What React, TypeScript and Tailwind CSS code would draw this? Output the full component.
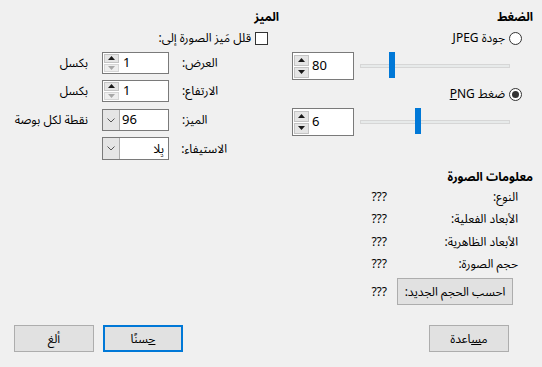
import React from "react"

const font = "font-['Noto_Sans','Noto_Sans_Arabic','DejaVu_Sans',sans-serif]"

function Radio({ checked }: { checked?: boolean }) {
  return (
    <span className="w-[13px] h-[13px] rounded-full border border-[#333333] bg-white flex items-center justify-center shrink-0">
      {checked && <span className="w-[7px] h-[7px] rounded-full bg-[#333333]" />}
    </span>
  )
}

function Arrow({ up, dim }: { up?: boolean; dim?: boolean }) {
  return (
    <svg width="7" height="4" viewBox="0 0 7 4">
      <path d={up ? "M0 4 L3.5 0 L7 4 Z" : "M0 0 L3.5 4 L7 0 Z"} fill={dim ? "#a8a8a8" : "#1a1a1a"} />
    </svg>
  )
}

/* compress spin box: 28px tall */
function TallSpin({ value }: { value: string }) {
  return (
    <div dir="ltr" className="w-[62px] h-[28px] border border-[#7a7a7a] bg-white flex items-center pl-[1px]">
      <div className="w-[15px] h-[23px] flex flex-col gap-[1px]">
        <span className="flex-1 bg-[#e5e5e5] border border-[#c4c4c4] flex items-center justify-center"><Arrow up /></span>
        <span className="flex-1 bg-[#e5e5e5] border border-[#c4c4c4] flex items-center justify-center"><Arrow /></span>
      </div>
      <span className="ml-[3px] text-[13px]">{value}</span>
    </div>
  )
}

/* resolution spin box: 22px tall */
function SmallSpin({ value }: { value: string }) {
  return (
    <div dir="ltr" className="w-[67px] h-[22px] border border-[#7a7a7a] bg-white flex items-center pl-[1px]">
      <div className="w-[15px] h-[18px] flex flex-col gap-[1px]">
        <span className="flex-1 bg-[#e5e5e5] border border-[#c4c4c4] flex items-center justify-center"><Arrow up /></span>
        <span className="flex-1 bg-[#eeeeee] border border-[#d6d6d6] flex items-center justify-center"><Arrow dim /></span>
      </div>
      <span className="ml-[4px] text-[13px]">{value}</span>
    </div>
  )
}

function Combo({ children, right }: { children: React.ReactNode; right?: boolean }) {
  return (
    <div dir="ltr" className="w-[67px] h-full border border-[#7a7a7a] bg-white flex items-stretch">
      <span className="w-[17px] bg-[#e5e5e5] border-r border-[#adadad] flex items-center justify-center">
        <svg width="8" height="5" viewBox="0 0 8 5">
          <path d="M0.5 0.5 L4 4 L7.5 0.5" fill="none" stroke="#555555" strokeWidth="1" />
        </svg>
      </span>
      <span className={right ? "flex-1 flex items-center justify-end pr-[4px]" : "flex-1 flex items-center pl-[2px] text-[13px]"}>
        {children}
      </span>
    </div>
  )
}

function Slider({ at }: { at: "jpeg" | "png" }) {
  return (
    <div className="relative w-[150px] h-[28px] flex items-center">
      <div className="w-full h-[4px] bg-[#e7eaea] border border-[#d6d6d6]" />
      {at === "jpeg" ? (
        <div className="absolute left-[29px] top-0 w-[6px] h-[26px] bg-[#0078d7]" />
      ) : (
        <div className="absolute left-[55px] top-0 w-[6px] h-[26px] bg-[#0078d7]" />
      )}
    </div>
  )
}

export default function App() {
  return (
    <div dir="rtl" className={`w-[542px] h-[367px] bg-[#f0f0f0] text-[12px] text-black flex flex-col ${font}`}>
      <div className="flex pr-[9px] pl-[8px] pt-[8px] gap-[13px]">
        {/* Compression + image info */}
        <div className="w-[241px] flex flex-col">
          <div className="h-[18px] leading-[18px] font-bold">الضغط</div>
          <div className="mt-[3px] h-[18px] flex items-center gap-[4px] pr-[11px]">
            <Radio />
            <span>جودة <u>J</u>PEG</span>
          </div>
          <div className="mt-[5px] h-[28px] flex items-center gap-[6px] pr-[23px]">
            <Slider at="jpeg" />
            <TallSpin value="80" />
          </div>
          <div className="mt-[5px] h-[18px] flex items-center gap-[4px] pr-[11px]">
            <Radio checked />
            <span>ضغط <u>P</u>NG</span>
          </div>
          <div className="mt-[5px] h-[28px] flex items-center gap-[6px] pr-[23px]">
            <Slider at="png" />
            <TallSpin value="6" />
          </div>

          <div className="mt-[32px] h-[18px] leading-[18px] font-bold">معلومات الصورة</div>
          <div className="mt-[2px] h-[18px] flex items-center gap-[10px] pr-[15px]">
            <span className="w-[121px]">النوع:</span>
            <span>???</span>
          </div>
          <div className="mt-[4px] h-[18px] flex items-center gap-[10px] pr-[15px]">
            <span className="w-[121px]">الأبعاد الفعلية:</span>
            <span>???</span>
          </div>
          <div className="mt-[5px] h-[18px] flex items-center gap-[10px] pr-[15px]">
            <span className="w-[121px]">الأبعاد الظاهرية:</span>
            <span>???</span>
          </div>
          <div className="mt-[4px] h-[18px] flex items-center gap-[10px] pr-[15px]">
            <span className="w-[121px]">حجم الصورة:</span>
            <span>???</span>
          </div>
          <div className="mt-[5px] h-[27px] flex items-center gap-[10px] pr-[20px]">
            <button className="w-[116px] h-[27px] bg-[#e1e1e1] border border-[#adadad]">احسب الحجم الجديد:</button>
            <span>???</span>
          </div>
        </div>

        {/* Resolution */}
        <div className="w-[271px] flex flex-col">
          <div className="h-[18px] leading-[18px] font-bold">الميز</div>
          <div className="mt-[3px] h-[18px] flex items-center gap-[4px] pr-[11px]">
            <span className="w-[13px] h-[13px] border border-[#333333] bg-white shrink-0" />
            <span>قلل مَيز الصورة إلى:</span>
          </div>
          <div className="mt-[5px] h-[22px] flex items-center pr-[52px]">
            <span className="w-[45px] text-left">العرض:</span>
            <span className="w-[13px]" />
            <SmallSpin value="1" />
            <span className="w-[14px]" />
            <span>بكسل</span>
          </div>
          <div className="mt-[6px] h-[22px] flex items-center pr-[52px]">
            <span className="w-[45px] text-left">الارتفاع:</span>
            <span className="w-[13px]" />
            <SmallSpin value="1" />
            <span className="w-[14px]" />
            <span>بكسل</span>
          </div>
          <div className="mt-[7px] h-[22px] flex items-center pr-[52px]">
            <span className="w-[45px] text-left">الميز:</span>
            <span className="w-[13px]" />
            <Combo>96</Combo>
            <span className="w-[14px]" />
            <span>نقطة لكل بوصة</span>
          </div>
          <div className="mt-[6px] h-[23px] flex items-center pr-[52px]">
            <span className="w-[45px] text-left">الاستيفاء:</span>
            <span className="w-[13px]" />
            <Combo right>
              <span dir="rtl"><u>ب</u>ِلا</span>
            </Combo>
          </div>
        </div>
      </div>

      <div className="mt-auto mb-[15px] flex justify-between pr-[33px] pl-[14px]">
        <button className="w-[80px] h-[27px] bg-[#e1e1e1] border border-[#adadad]">
          م<u>س</u>اعدة
        </button>
        <div className="flex gap-[9px]">
          <button className="w-[80px] h-[27px] bg-[#e1e1e1] border-2 border-[#0078d7]">
            <u>ح</u>سنًا
          </button>
          <button className="w-[80px] h-[27px] bg-[#e1e1e1] border border-[#adadad]">ألغ</button>
        </div>
      </div>
    </div>
  )
}
